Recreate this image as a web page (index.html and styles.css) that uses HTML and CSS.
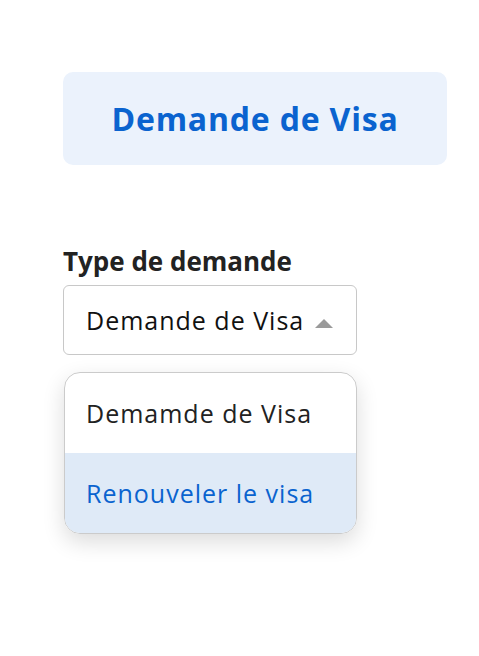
FILE: index.html
```html
<!DOCTYPE html>
<html lang="fr">
<head>
<meta charset="utf-8">
<link rel="stylesheet" href="styles.css">
</head>
<body>
<div class="page">
  <div class="header"><h1>Demande de Visa</h1></div>
  <div class="field">
    <div class="label">Type de demande</div>
    <div class="select">
      <span>Demande de Visa</span>
      <svg class="caret" width="18" height="9" viewBox="0 0 18 9"><path d="M0 9 L9 0 L18 9 Z" fill="#9a9a9a"/></svg>
    </div>
    <div class="menu">
      <div class="option">Demamde de Visa</div>
      <div class="option active">Renouveler le visa</div>
    </div>
  </div>
</div>
</body>
</html>
```
FILE: styles.css
```css
html, body { margin: 0; padding: 0; background: #fff; }
body { font-family: "Open Sans", "Noto Sans", sans-serif; color: #222; }
.page { padding: 72px 0 80px 63px; }
.header {
  width: 384px; height: 93px; box-sizing: border-box;
  background: #ebf2fc; border-radius: 10px;
  display: flex; align-items: center; justify-content: center;
}
.header h1 { margin: 0; font-size: 32px; font-weight: 700; letter-spacing: 0.8px; color: #0a63cf; }
.field { margin-top: 81px; width: 294px; }
.label { font-size: 26px; font-weight: 700; color: #222; line-height: 30px; }
.select {
  margin-top: 9px; height: 70px; box-sizing: border-box;
  border: 1.5px solid #c8c8c8; border-radius: 6px;
  display: flex; align-items: center; justify-content: space-between;
  padding: 0 23px 0 22px; font-size: 25px; letter-spacing: 1px; color: #111;
}
.caret { margin-top: 6px; }
.menu {
  margin-top: 17px; margin-left: 1px; width: 293px; box-sizing: border-box;
  border: 1.5px solid #cbcbcb; border-radius: 16px; overflow: hidden;
  box-shadow: 0 8px 22px rgba(0,0,0,0.14);
}
.option { height: 80px; display: flex; align-items: center; padding-left: 21px; font-size: 25px; letter-spacing: 1px; color: #222; }
.option.active { background: #dfeaf7; color: #0a63cf; }
```
